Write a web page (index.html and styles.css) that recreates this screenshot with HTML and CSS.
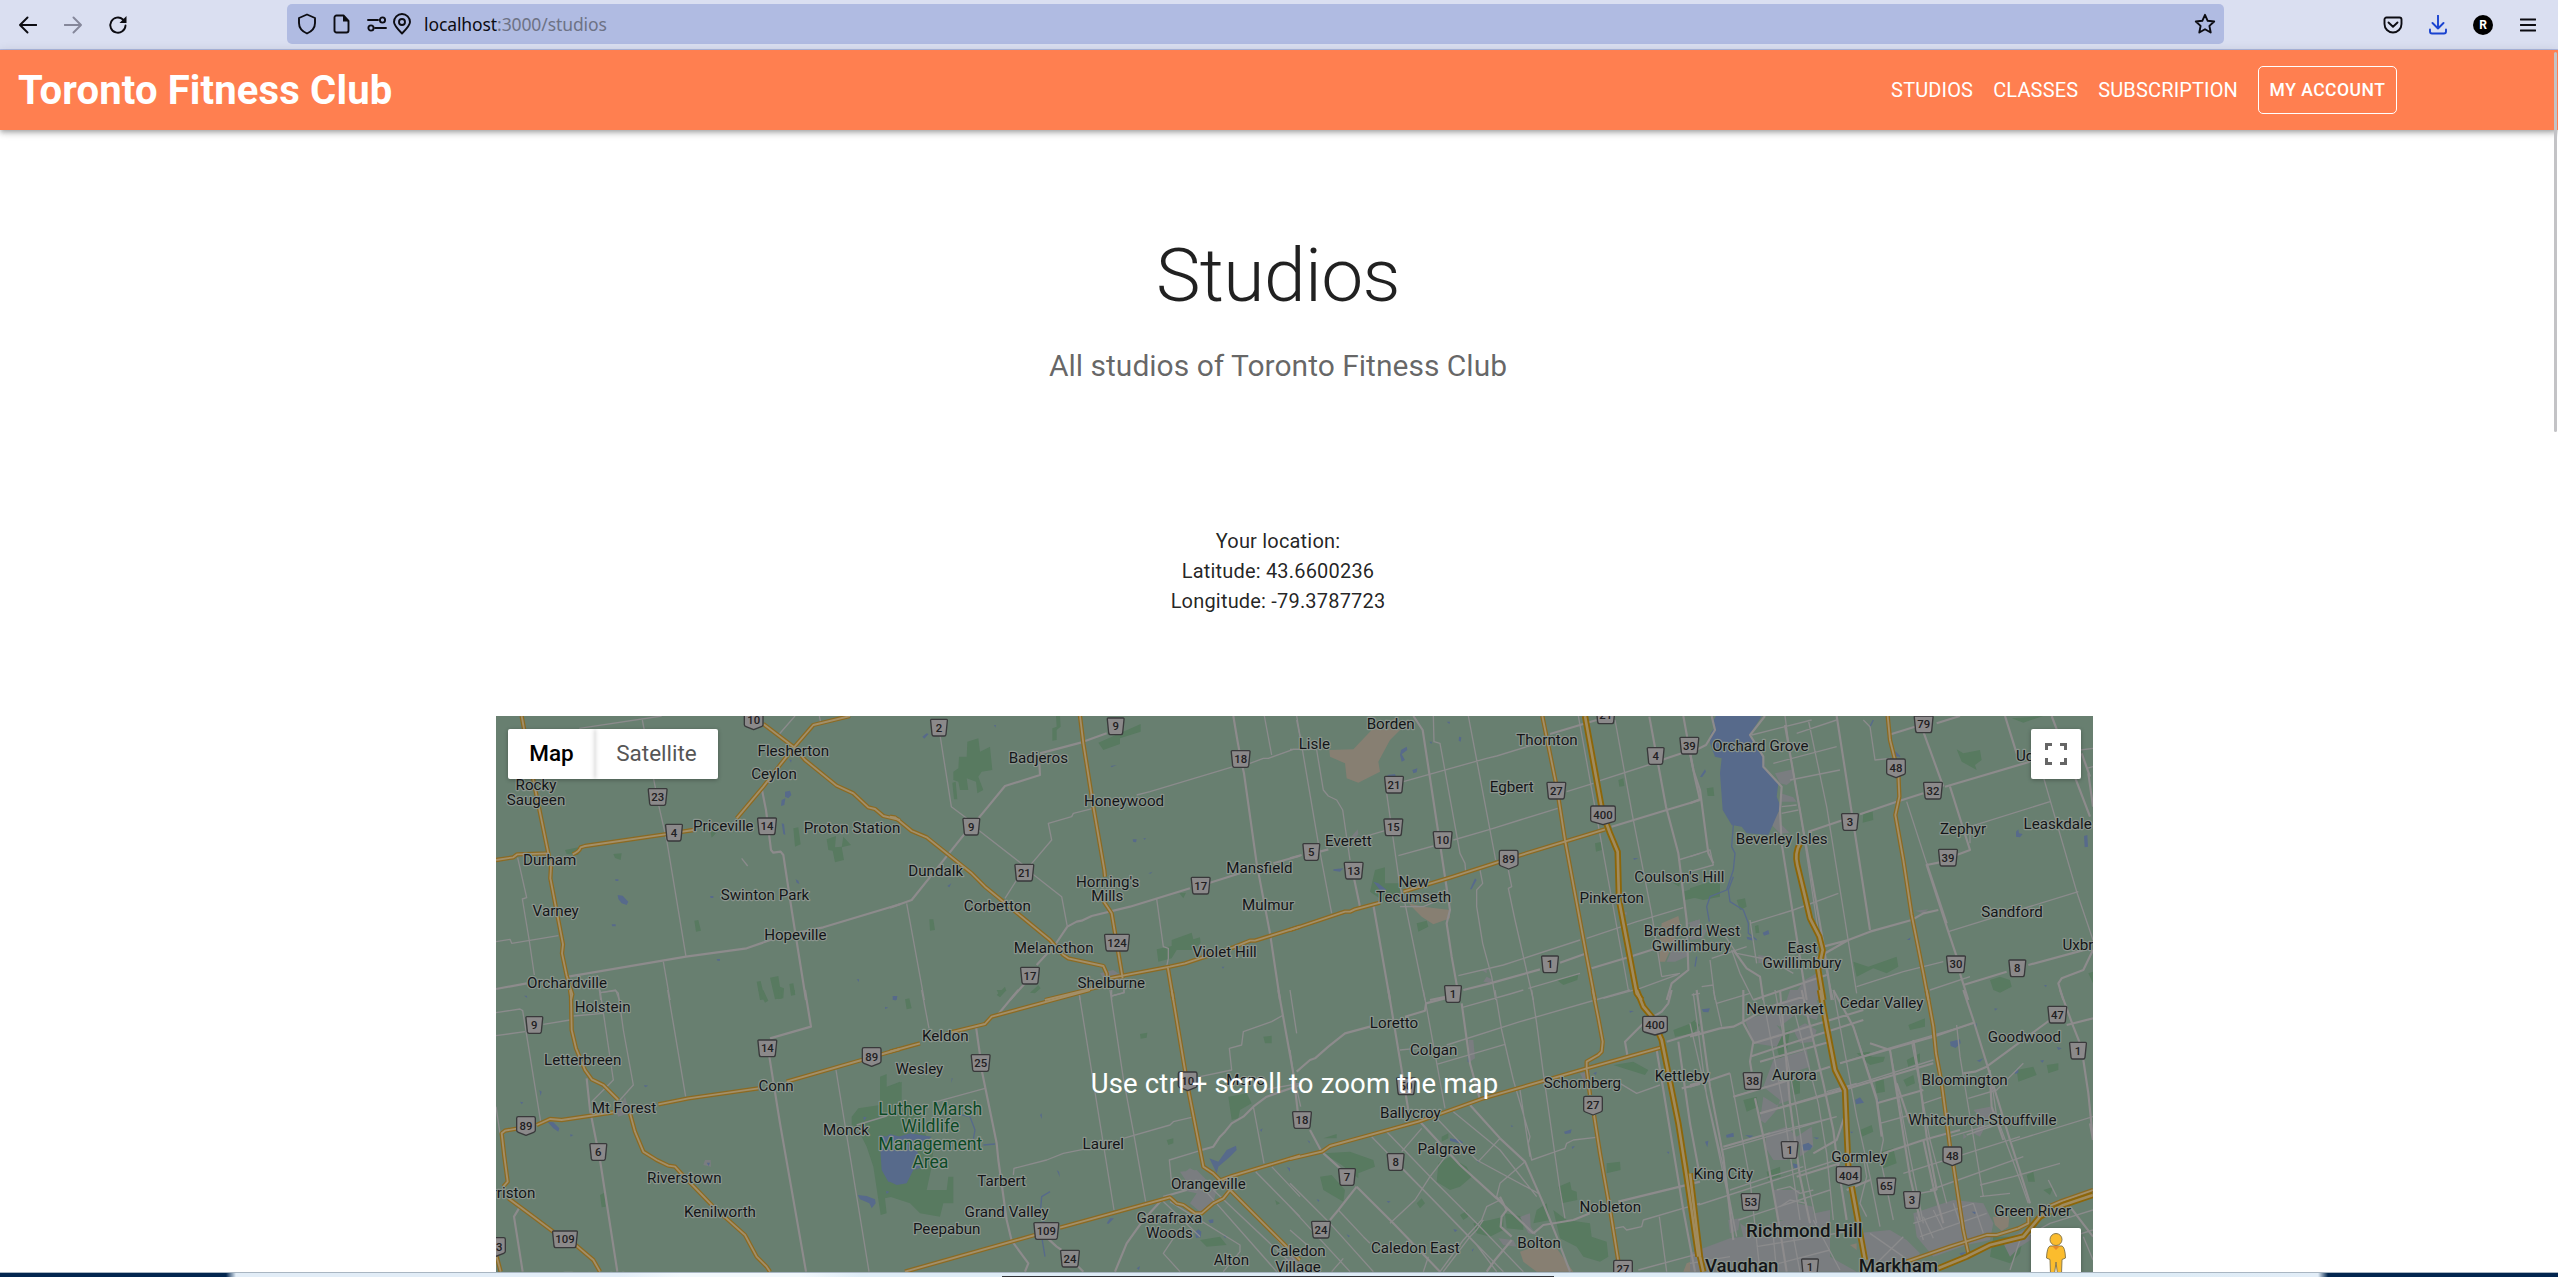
FILE: index.html
```html
<!DOCTYPE html>
<html lang="en">
<head>
<meta charset="utf-8">
<title>Toronto Fitness Club</title>
<link rel="stylesheet" href="styles.css">
</head>
<body>
<div class="browser-bar">
  <div class="nav-icons">
    <svg width="18" height="18" viewBox="0 0 18 18"><path d="M17.5 9H1.5M8.5 1.5 1 9l7.5 7.5"/></svg>
    <svg class="disabled" width="18" height="18" viewBox="0 0 18 18"><path d="M.5 9h16M9.500 1.500 17 9l-7.500 7.500"/></svg>
    <svg width="20" height="20" viewBox="0 0 20 20"><path d="M17.500 10.500a7.600 7.600 0 1 1-2.500-6"/><path class="solid" d="M18.500 1v7h-7z"/></svg>
  </div>
  <div class="url-bar">
    <svg class="i-shield" width="20" height="22" viewBox="0 0 20 22"><path d="M10 1.500 18 5v5c0 5-3.500 8.500-8 10.500C5.500 18.500 2 15 2 10V5z"/></svg>
    <svg class="i-doc" width="18" height="20" viewBox="0 0 18 20"><path d="M3.500 1.500h7l5 5.500v9.500a2 2 0 0 1-2 2h-10a2 2 0 0 1-2-2v-13a2 2 0 0 1 2-2z"/><path class="solid" d="M10 1v6.500h6z"/></svg>
    <svg class="i-perm" width="20" height="16" viewBox="0 0 20 16"><path d="M1 4h10M8 12h11"/><circle cx="15.500" cy="4" r="2.600"/><circle cx="4" cy="12" r="2.600"/></svg>
    <svg class="i-pin" width="20" height="22" viewBox="0 0 20 22"><path d="M10 20.500C6 16.500 2 12.500 2 9a8 8 0 0 1 16 0c0 3.500-4 7.500-8 11.500z"/><circle cx="10" cy="9" r="3"/></svg>
    <span class="url"><b>localhost</b>:3000/studios</span>
    <svg class="i-star" width="22" height="22" viewBox="0 0 22 22"><path d="m11 1.800 2.700 6 6.500.7-4.800 4.400 1.300 6.600-5.700-3.300-5.700 3.300 1.300-6.600L1.800 8.500l6.500-.7z"/></svg>
  </div>
  <div class="tool-icons">
    <svg width="20" height="18" viewBox="0 0 20 18"><path d="M3.500 1.500h13a2 2 0 0 1 2 2V8a8.500 8.500 0 0 1-17 0V3.500a2 2 0 0 1 2-2zM5.500 6.500 10 10.800l4.500-4.300"/></svg>
    <svg class="download" width="18" height="20" viewBox="0 0 18 20"><path d="M9 .5v13M3.500 8 9 13.500 14.500 8M1 14.500v2a2 2 0 0 0 2 2h12a2 2 0 0 0 2-2v-2"/></svg>
    <span class="avatar">R</span>
    <svg width="16" height="14" viewBox="0 0 16 14"><path d="M.5 1.500h15M.5 7h15M.5 12.500h15"/></svg>
  </div>
</div>

<header class="app-bar">
  <div class="brand">Toronto Fitness Club</div>
  <nav class="links"><a>STUDIOS</a><a>CLASSES</a><a>SUBSCRIPTION</a><button class="account">MY ACCOUNT</button></nav>
  <div class="scroll-thumb"></div>
</header>

<main class="content">
  <h1>Studios</h1>
  <p class="subtitle">All studios of Toronto Fitness Club</p>
  <p class="location">Your location:<br>Latitude: 43.6600236<br>Longitude: -79.3787723</p>
  <section class="map">
    <svg id="map-canvas" class="map-canvas" viewBox="0 0 4791 1668"></svg>
    <div class="map-type"><span class="active">Map</span><span>Satellite</span></div>
    <div class="map-button fullscreen"><svg width="22" height="22" viewBox="0 0 22 22"><path d="M1.500 7V1.500H7M15 1.500h5.500V7M20.500 15v5.500H15M7 20.500H1.500V15"/></svg></div>
    <div class="map-button pegman"><svg width="22" height="44" viewBox="0 0 22 44"><path class="peg" d="M5 14h12q3 1 3.500 12l-3.500 1.500L16.500 42h-4L11 30 9.500 42h-4L5 27.500 1.500 26Q2 15 5 14z"/><path class="collar" d="m7 14 4 4 4-4z"/><circle class="peg" cx="11" cy="7.500" r="6"/></svg></div>
    <div class="zoom-hint">Use ctrl + scroll to zoom the map</div>
  </section>
</main>
<footer class="desktop-strip"><div class="dock-edge"></div></footer>
<script src="map.js"></script>
</body>
</html>
```
FILE: styles.css
```css
* { box-sizing: border-box; }
body { margin: 0; width: 2558px; height: 1277px; overflow: hidden; background: #fff; font-family: Roboto, "Liberation Sans", sans-serif; color: rgba(0,0,0,.87); display: flex; flex-direction: column; }
svg { display: block; flex: none; }

.browser-bar { height: 50px; flex: none; background: #dadff1; border-bottom: 1px solid #b0bbe2; display: flex; align-items: center; }
.browser-bar svg { fill: none; stroke: #0c0c12; stroke-width: 1.9; stroke-linecap: round; stroke-linejoin: round; }
.browser-bar svg .solid { fill: #0c0c12; stroke: none; }
.nav-icons { width: 287px; padding-left: 19px; display: flex; align-items: center; gap: 26.500px; }
.nav-icons .disabled { stroke: #85879a; }
.url-bar { width: 1937px; height: 40px; margin-top: -1px; padding-left: 10px; background: #b0bbe2; border-radius: 5px; display: flex; align-items: center; }
.i-doc { margin-left: 16px; }
.i-perm { margin-left: 16px; }
.i-pin { margin-left: 5px; }
.url { margin-left: 12px; font: 17.500px/24px "Noto Sans", sans-serif; letter-spacing: -.1px; color: #6d7285; white-space: nowrap; }
.url b { font-weight: 400; color: #0c0c12; }
.i-star { margin: 0 8px 0 auto; }
.tool-icons { margin-left: 159px; display: flex; align-items: center; gap: 26px; }
.tool-icons .download { stroke: #1a43d0; }
.avatar { width: 20px; height: 20px; border-radius: 50%; background: #000; color: #fff; font: 700 12px/20px Roboto, sans-serif; text-align: center; }
.tool-icons svg:last-child { margin-left: 1px; }

.app-bar { position: relative; height: 80px; flex: none; background: #ff7f50; color: #fff; padding: 0 161px 0 18px; display: flex; align-items: center; justify-content: space-between; box-shadow: 0 2px 4px -1px rgba(0,0,0,.2), 0 4px 5px rgba(0,0,0,.14), 0 1px 10px rgba(0,0,0,.12); }
.brand { padding-top: 1px; font-size: 40px; font-weight: 700; line-height: 60px; letter-spacing: .15px; }
.links { display: flex; align-items: center; gap: 20px; font-size: 20px; line-height: 30px; letter-spacing: .15px; }
.account { width: 139px; height: 48px; padding: 0; border: 1px solid #fff; border-radius: 5px; background: none; color: #fff; font: 500 17.500px/30px Roboto, sans-serif; letter-spacing: .5px; }
.scroll-thumb { position: absolute; right: 1px; top: 2px; width: 3px; height: 380px; border-radius: 2px; background: #c3c3c6; }

.content { flex: 1; min-height: 0; padding: 100px 2px 0 0; display: flex; flex-direction: column; align-items: center; }
h1 { margin: 0; font-size: 75px; font-weight: 300; line-height: 90px; letter-spacing: -.625px; }
.subtitle { margin: 21px 0 0; font-size: 30px; line-height: 50px; color: rgba(0,0,0,.6); }
.location { margin: 135px 0 100px; font-size: 20px; line-height: 30px; letter-spacing: .19px; text-align: center; }
.map { position: relative; align-self: flex-start; width: 1597px; height: 556px; margin-left: 496px; flex: none; overflow: hidden; background: #687f70; }
.map-canvas { width: 1597px; height: 556px; }

.map-type { position: absolute; left: 12px; top: 13px; width: 210px; height: 50px; display: flex; border-radius: 2px; overflow: hidden; background: #fff; box-shadow: 0 1px 4px rgba(0,0,0,.3); font-size: 22.500px; line-height: 49px; color: #565656; text-align: center; }
.map-type span { width: 123px; box-shadow: 0 0 5px rgba(0,0,0,.2); }
.map-type .active { width: 87px; font-weight: 500; color: #000; }
.map-button { position: absolute; left: 1535px; width: 50px; height: 50px; display: grid; place-items: center; background: #fff; border-radius: 2px; box-shadow: 0 1px 4px rgba(0,0,0,.3); }
.fullscreen { top: 13px; }
.fullscreen path { fill: none; stroke: #666; stroke-width: 3; }
.pegman { top: 512px; height: 58px; padding-top: 4px; place-items: start center; }
.peg { fill: #fbbc2d; stroke: #8a7a4c; stroke-width: 1; }
.collar { fill: #e58a2c; }
.zoom-hint { position: absolute; left: 0; right: 0; top: 343px; height: 50px; color: #fff; font-size: 27.500px; line-height: 50px; letter-spacing: .15px; text-align: center; }

.forest { fill: #587a60; }
.water { fill: #576a8b; }
.town { fill: #7a7d80; }
.sand { fill: #877f72; }
.minor, .road, .river, .highway-edge, .highway, .freeway-edge, .freeway { fill: none; stroke-linejoin: round; }
.river { stroke: #576a8b; stroke-width: 4; }
.minor { stroke: #8b8b8c; stroke-width: 4; }
.road { stroke: #8d8b8c; stroke-width: 6.500; }
.highway-edge { stroke: #8c6a22; stroke-width: 13; }
.highway { stroke: #a38f68; stroke-width: 5.500; }
.freeway-edge { stroke: #8d6608; stroke-width: 19; }
.freeway { stroke: #a08b5e; stroke-width: 8; }
.place { font-size: 45.500px; fill: #141618; stroke: #8b958e; stroke-width: 7; stroke-linejoin: round; paint-order: stroke; text-anchor: middle; }
.city { font-size: 56px; font-weight: 500; }
.park { font-size: 53px; fill: #0d4a26; }
.badge { fill: #8b898a; stroke: #39393b; stroke-width: 4; stroke-linejoin: round; }
.badge-text { font-size: 34px; fill: #1f2022; text-anchor: middle; font-weight: 500; }

.desktop-strip { height: 5px; flex: none; border-top: 1px solid #a9b6c2; background: linear-gradient(90deg, #02264f 0 226px, #e2edf7 236px 620px, #f2f8fc 680px 800px, #deecf6 860px 2160px, #e2edf7 2318px, #02264f 2328px); }
.dock-edge { width: 552px; height: 1px; margin: 3px 0 0 1002px; background: #303236; }
```
FILE: map.js
```js
// Map geometry is stored per tile, in tile units (three units per screen pixel).
const tiles = [
  { x: -18, y: -18,
    forest: "M910 355 925 352 932 403 915 410zM1010 388 1038 378 1035 412 1055 410 1062 450 1035 457 1028 422 1015 420zM1060 380 1083 405 1055 412zM370 432 395 430 392 450 375 444zM613 632 625 630 633 662 618 665zM840 803 865 798 870 830 882 835 880 865 855 868zM800 815 812 813 825 868 810 870zM898 822 910 820 916 855 903 857zM225 420 265 412 265 435 230 432zM660 360 678 370 665 383z",
    water: "M383 555 398 557 415 575 410 585 395 580 385 567zM885 245 900 242 904 255 895 265 885 260zM875 270 886 265 883 285 873 288zM875 340 882 342 886 375 880 372zM917 508 925 512 928 522 920 518zM660 558 670 558 670 564 662 564zM365 643 377 643 377 649 367 649zM375 508 385 508 385 513 377 513zM680 747 690 747 690 752 682 752zM897 148 905 150 903 158zM1208 858 1222 858 1220 870 1208 870zM1100 808 1107 808 1107 816zM102 857 110 857 112 864z",
    minor: "M457 30 480 150 507 290 530 390 588 740M83 443 110 563 97 567 118 693 133 795M18 695 60 688 65 700 205 677M268 55 515 18M520 755 540 870M322 795 332 870M332 848 378 842 388 870M868 72 915 18M988 18 992 38M755 445 773 468",
    road: "M18 837 110 820M235 800 588 740 770 715 870 680 1000 652 1230 583M815 235 828 300 843 420 850 428 872 425 880 435 905 600 948 870",
    highway: "M95 18 130 210 175 430 183 470 181 505 219 703 216 730 230 797 247 853 243 870M18 450 70 442 82 433 170 430M248 433Q268 425 272 412L285 408 525 373 610 360M740 325 820 230 870 165 912 112 970 45 1080 18M820 42 912 112 945 150 1040 227 1090 250 1135 292 1155 297 1180 318 1230 330",
    freeway: "" },
  { x: 1182, y: -18,
    forest: "M232 95 265 85 270 125 300 110 307 180 275 185 265 200 280 240 262 250 258 215 230 205 235 240 210 240 205 215 190 210 190 185 205 175 207 140 230 140zM187 218 197 215 202 268 192 268zM625 98 752 42 752 65 690 85 690 102 640 120zM498 18 510 18 512 50 500 60 500 90 487 92 487 55 500 50zM118 628 130 628 135 660 120 662zM845 690 905 668 910 688 930 682 932 700 905 720 860 720 845 745 805 755 800 718 845 708zM320 855 345 830 348 840 330 862zM420 848 445 825 452 835 435 850zM868 550 888 548 880 565z",
    water: "M97 80 110 70 116 72 103 86zM662 168 680 165 665 172zM728 388 740 388 738 397 730 396zM172 528 184 520 178 532zM775 490 787 485 782 491zM10 858 20 858 18 868 10 868zM312 45 318 45 316 53zM760 385 768 384 764 390zM995 770 1003 770 999 776z",
    town: "M630 790 670 780 700 800 690 815 650 820z",
    minor: "M150 75 184 290 230 325M265 360 400 465M380 510 345 565M425 490 515 560 532 650M400 490 485 390 475 340 545 320 550 310 610 295M740 255 780 245 930 200 1030 170M50 580 103 870M800 567 820 710 835 715 835 745 830 770M568 850 570 870M665 840 665 870M665 858 702 848 702 835M1123 18 1145 135M1080 160 1120 145 1135 145 1210 118 1230 118M1220 30 1230 80",
    road: "M650 70 575 97 450 130M448 160 450 195 345 228 265 325M225 370 65 570 0 593M1030 18 1042 90 1055 160 1062 190 1100 460 1140 670 1170 870M532 650 560 635 575 632 605 618 720 590 900 535M955 520 1050 490M1150 460 1230 437M532 650 495 705 440 765M405 820 360 870",
    highway: "M570 18 580 100 610 290 643 480 645 500M625 550 665 610 698 805M0 320 15 322 65 363 110 382 245 490 285 530 340 575 480 690 520 735 535 745 640 768 650 790 652 830 655 805 840 770 885 760 1030 712 1080 692 1095 692 1230 650M465 870 650 825M833 770 850 870",
    freeway: "" },
  { x: 2382, y: -18,
    forest: "M255 480 285 472 285 520 330 520 330 560 290 580 240 545zM380 640 410 632 415 650 385 665zM915 400 935 395 935 420 918 425zM985 210 1000 205 1003 228 988 230zM1180 545 1230 528 1230 560 1185 570zM800 810 865 793 862 810 820 825zM1150 520 1170 515 1168 530z",
    water: "M333 120 350 110 352 120 335 133 345 150 335 155 330 135zM367 180 382 175 380 187 370 190zM292 195 315 192 318 200 295 202zM250 515 265 520 290 540 270 540zM555 505 560 510 545 538 540 538zM470 35 480 35 478 42zM507 80 514 82 512 95 506 92zM130 478 160 475 150 485 130 482zM1030 444 1045 445 1032 450zM418 95 426 95 424 102z",
    town: "M180 385 203 358 205 372 190 395zM580 815 590 800 605 808 605 820zM1130 755 1145 720 1200 710 1190 740 1155 755zM1190 640 1230 628 1230 650zM1000 610 1010 605 1010 615zM575 780 590 778 590 790z",
    sand: "M118 120 190 118 245 60 325 20 330 60 300 90 265 155 270 185 205 218 170 205 165 160 120 140zM355 580 400 590 480 600 480 625 430 643 395 620zM1110 690 1115 640 1165 618 1170 640 1150 700 1125 755 1108 755z",
    minor: "M20 18 85 400 125 610M0 118 70 118M80 120 100 240 115 258 140 270 158 300 180 450M290 250 330 530 345 580 405 870M430 18 432 95 450 100 510 430 525 460 527 485M535 18 617 450M340 215 590 145 620 138 770 92M325 437 430 408M490 390 600 358 690 330 803 295M830 245 910 220M205 385 285 362M570 480 578 520 560 540 560 590 578 700 605 800 617 870M655 480 665 530 655 535 675 630 730 870M865 18 1015 840M975 30 1028 320 1085 610 1115 800M505 797 640 765 870 690M890 685 1040 635 1180 593M920 215 1075 165M1165 450 1230 430M330 590 400 590 460 565M1115 800 1170 790M715 835 870 790M940 865 1050 835 1165 793",
    road: "M370 18 398 60 430 270 480 600 470 640 485 740 503 840M0 445 35 435M90 425 115 418M205 480 190 495 210 590M250 585 300 870M520 840 600 820 750 778M810 758 890 730M905 775 1020 740 1100 715M780 72 920 30M1078 20 1128 290 1165 430 1190 630 1195 780 1170 800 1145 820 1130 870M965 350 1130 300 1230 270M1180 18 1195 100 1215 205 1230 270M1075 165 1130 145 1180 128M420 870 470 860",
    highway: "M757 18 800 230 825 390 890 740 915 870M0 660 165 605 180 605 195 598 270 578M340 545 480 503 650 448 945 358",
    freeway: "M885 18 938 310 960 370 983 425 987 570 1040 850 1055 870" },
  { x: 3582, y: -18,
    forest: "M800 118 820 130 870 120 875 150 855 165 860 180 815 155zM520 310 548 305 550 330 518 338zM50 235 70 232 73 258 53 258zM490 755 535 770 620 740 625 770 590 790 550 775 500 800zM0 535 60 515 90 520 90 560 40 570 0 560zM140 570 165 565 170 590 150 600zM900 810 930 800 960 810 965 830 930 848 910 840zM965 25 1060 18 1000 38zM1195 790 1209 785 1209 820zM195 648 205 645 208 668 197 670z",
    water: "M78 18 215 18 182 70 185 85 215 120 225 175 265 220 260 260 272 290 235 375 170 370 155 350 125 345 98 300 90 190 95 145 75 140 60 100 62 70 75 52 66 38zM30 200 45 178 48 185 36 202zM978 365 985 358 987 370 998 372 990 382 978 380zM1182 378 1192 375 1194 410 1184 412zM218 668 235 660 238 672 222 677zM650 690 662 682 660 690zM612 125 630 138 620 140zM1062 825 1070 825 1068 832zM170 680 190 684 190 692 172 688z",
    town: "M255 190 310 178 315 205 290 225 270 220zM272 250 310 262 320 275 275 275 270 340 300 370 270 370 240 340 270 300zM0 640 20 630 30 650 0 660zM205 735 240 740 240 755 205 760zM300 870 345 810 380 790 385 870zM675 602 715 598 700 610zM0 650 50 660 40 685 0 690z",
    river: "M130 345 125 410 135 430 130 480 110 540 60 560 50 590 58 635M130 500 115 540 120 575 160 600 175 640 175 670 200 690M540 50 550 30M615 125 630 140M20 740 15 770",
    minor: "M285 18 300 130 330 300 390 700 430 870M355 30 410 290 460 600 500 850M185 75 365 30M320 70 440 30M250 160 440 110M300 210 450 180M520 30 540 50 555 150 600 145M650 275 710 460M180 640 310 600 445 550M180 630 200 760M65 745 170 710M840 400 840 350 1080 275M1025 80 1160 545 1209 690M775 665 920 620 1165 545M500 830 640 785 760 755M720 840 840 800M1170 120 1209 115M1190 175 1209 170M0 440 60 420 70 465 0 485M60 750 75 870M125 720 150 790 190 870M35 830 70 825M275 310 325 300M275 290 320 285M100 670 140 730 240 750 310 790",
    road: "M225 18 180 75 220 140 220 170 275 230 270 300 275 400 350 870M18 120 48 105 75 60 65 18M285 45 340 360 400 700 425 870M0 130 10 180 30 240 55 430 70 460M0 280 30 268M355 365 475 325M510 313 620 275 700 250M765 230 1020 155M595 75 675 50M740 40 810 18M700 65 760 230M780 230 840 420 800 435M760 455 710 465 775 665 800 740M710 460 770 640M810 790 835 870M370 750 475 690 540 665 665 630 700 610 745 600M440 18 540 660M945 18 980 130M1085 18 1200 320M820 825 950 785M1015 765 1200 715M1209 720 1180 780 1115 805 1105 820 1120 870M190 870 410 795M130 720 170 775 210 800 220 870M1195 190 1209 290M1175 130 1200 200M400 710 475 690",
    highway: "M593 18 600 90 625 190 628 260 616 315 640 450 665 615 700 790 715 870",
    freeway: "M330 400 Q313 430 322 465L345 560 360 625 388 680 398 720 385 780 400 870" },
  { x: -18, y: 822,
    forest: "M1170 260 1190 252 1190 290 1230 275 1230 615 1185 625 1190 670 1172 675 1150 530 1130 470 1100 410 1085 405 1085 380 1105 355 1170 345zM805 0 820 0 835 32 825 38zM865 0 875 0 876 25 866 28zM905 0 915 0 914 15zM330 615 343 608 347 650 335 652z",
    water: "M172 395 190 397 208 415 205 425 190 415zM1168 435 1190 440 1200 432 1230 440 1230 580 1195 575 1175 540zM1103 615 1130 618 1155 628 1157 640 1145 655 1138 640 1110 628zM148 300 155 305 152 318zM462 285 475 287 465 292zM1208 18 1220 22 1215 32zM1185 50 1195 53 1185 57zM1188 603 1198 605 1190 612zM90 335 100 337 95 343zM240 433 250 435 242 440zM650 518 660 518 656 528zM376 267 384 270zM1120 380 1130 382 1122 392z",
    town: "M640 525 645 510 662 510 663 530zM380 370 405 320 420 370 400 375 385 380z",
    minor: "M18 68 90 57 98 62 152 395M18 137 105 125M160 103 240 90M250 78 340 70M533 0 587 320M330 0 370 270 305 335M375 0 385 10 400 120 430 285 390 330M332 8 378 0M1038 240 1137 845M1100 405 1190 378M18 350 30 430",
    road: "M290 265 300 360 330 510 382 845M945 0 963 110 840 145M838 200 870 400 948 845M90 650 72 680 98 845",
    highway: "M240 0 243 20 245 120 258 175 285 240 305 268 340 285 385 330M505 343 595 325 805 295M890 275 1115 210 1230 177M140 405 180 387 215 390 370 367M420 370 435 425 460 485 500 510 535 527 555 530 575 552 670 650 765 735 800 800 830 830 840 845M85 415 45 422 35 430 43 500 53 575 40 590M55 625 130 680 190 725M245 755 310 810 330 845M20 800 32 845",
    freeway: "" },
  { x: 1182, y: 822,
    forest: "M0 290 35 275 35 330 0 345zM0 340 50 335 90 370 100 420 130 480 125 530 110 600 170 600 175 560 190 560 190 640 160 640 150 680 90 670 60 640 0 620zM45 28 58 25 65 55 50 58zM750 132 772 128 770 143 752 146zM1120 140 1145 137 1145 160 1125 160zM1015 320 1070 310 1085 340 1050 360 1045 385 1025 390zM830 450 850 445 850 460 835 465zM320 0 350 0 330 20zM1155 630 1170 640 1160 645zM930 750 990 740 1010 765 950 770z",
    water: "M0 450 25 440 60 430 125 440 80 480 100 530 70 540 50 580 20 585 0 575zM958 505 985 515 1010 480 1038 467 1040 480 1020 500 985 530 980 550zM915 725 925 718 934 725 932 742 918 744zM955 690 970 688 970 698 960 700zM650 700 660 685 672 685 655 702zM500 540 507 545 510 562zM450 375 455 370 456 387zM10 20 18 20 16 32zM1110 420 1118 415 1114 426zM185 265 188 265 184 280zM1190 530 1200 535 1200 545zM1000 737 1010 737 1006 745zM740 835 750 828 747 840z",
    town: "M845 595 860 570 890 575 870 545 920 540 940 560 980 600 970 640 930 665 900 640 920 610zM885 545 900 535 920 545zM1180 810 1230 790 1230 830 1190 840z",
    river: "M190 370 240 380 255 420 248 460M480 605 455 620 450 680 465 700M280 465 315 462M455 740 465 800",
    minor: "M95 0 117 115M568 15 672 660M660 0 700 265 730 425 767 635M665 18 702 8 702 0M370 555 372 535 470 510 520 490 580 478M700 445 840 405 850 395 905 382M930 260 1025 240 1018 175 1055 165 1060 125 1145 95 1180 75M140 335 285 295M845 580 838 510 930 482M840 635 1050 765 1050 785 1000 845M1090 350 1122 520M1097 545 1230 680M1145 530 1230 620M935 590 1160 845M970 600 1230 845M810 625 930 740M870 715 820 790 870 845M1015 600 1130 710 1230 830M1120 300 1230 280",
    road: "M385 0 325 72M258 110 270 195M275 240 320 460 325 510 350 690 365 752 415 820 405 845M440 715 500 770 515 780M560 825 580 845M1165 0 1210 250 1225 380M1230 285 1130 320 1090 350 1060 380 1025 400 1005 425 990 440 970 470 935 480M820 625 760 690 710 760 675 845M820 620 890 600",
    highway: "M0 185 90 160M170 130 285 102 305 80 600 0M845 0 870 150 895 300 940 530 970 550 1020 600 1230 810M510 713 840 622 860 640 880 645 915 670 935 670 970 640 1000 625 1020 600M980 575 1020 560 1230 497M45 845 435 735",
    freeway: "" },
  { x: 2382, y: 822,
    forest: "M100 490 180 485 250 510 255 530 205 550 205 565 155 525zM90 560 125 555 165 600 160 635 100 600zM445 520 480 500 530 530 545 560 510 590 480 600 440 575zM805 590 840 575 845 600 860 605 862 630 815 640zM790 660 830 690 900 700 905 740 950 755 955 800 930 815 880 800 860 770 810 745zM600 690 640 680 640 720 600 740 560 730 550 700zM645 670 700 680 700 720 650 715zM1150 120 1215 95 1230 105 1210 130 1155 140zM950 520 990 515 992 540 950 550zM970 225 1030 215 1075 240 1065 255 1000 235zM380 640 395 625 405 640 390 655zM510 675 530 662 535 680 520 690zM740 660 770 640 780 690 730 700zM100 445 140 432 140 445zM455 440 475 430 475 445 455 455z",
    water: "M480 445 510 450 520 458 505 460 480 452zM822 425 845 418 842 430 825 432zM845 470 855 468 847 477zM534 185 540 190 540 220 533 215zM490 717 502 720 495 727zM170 733 180 738 175 742zM80 628 88 630 85 636zM545 780 552 775 548 785zM290 633 302 634 295 639zM662 406 670 408 665 412zM910 250 920 245 918 255zM1130 485 1138 485 1136 492zM1018 62 1032 63 1020 68zM560 512 568 512 566 518zM52 450 60 455 58 460z",
    town: "M535 150 550 150 555 205 540 215zM690 680 720 670 722 710 740 735 715 730zM625 745 670 750 680 770 640 765zM870 250 900 245 895 275 880 270z",
    sand: "M690 785 760 760 800 775 850 845 740 845 700 815zM1190 820 1230 805 1230 845 1180 845z",
    minor: "M0 180 10 250 32 350M400 0 465 355M330 180 380 175M440 223 645 163M470 165 690 95 1020 0M515 53 660 12 700 0M615 0 635 120 670 270 720 440 715 460 725 510 790 487 825 475 830 460 850 450 918 442M725 0 740 100 760 250 810 600 825 685M690 300 720 500M440 385 560 510 745 610M490 365 630 480 740 620M245 440 450 650 640 845M290 425 430 570 560 700 700 845M395 415 335 485M340 540 420 620 560 765 620 845M1205 15 1230 10M640 640 620 620 630 580 705 515M300 700 375 630 420 560 490 470M580 690 560 720 540 740 460 845M450 845 520 750 575 690 590 650 630 630M0 580 120 700 250 845M0 650 180 845M145 660 220 740 240 760M0 720 80 790M415 800 400 845M125 845 160 805M955 275 990 280 1040 310 1110 285M975 715 1000 710 1010 720 1055 710 1060 690 1230 640M1108 680 1130 845M1045 840 1230 790M565 515 630 445M0 0 20 130",
    road: "M20 245 60 210 75 205 115 170 165 130 240 110M345 80 405 62 408 40 465 25M295 0 355 360M515 40 540 220 570 330M390 395 510 525 620 625 730 730M540 345 630 445 705 515 760 640 800 740 840 845M60 420 95 485 150 535M200 590 145 660 120 690M200 590 310 700 450 845M850 690 900 670M730 730 760 705 850 690M985 635 1170 590 1230 575M1145 0 1135 40 1115 65 1065 95 1005 155 1012 195M1130 155 1230 125M1100 180 1180 660 1215 845M1165 155 1200 400 1230 560M630 620 650 660 635 680 632 710 665 740M665 750 615 810 590 845M1175 295 1230 282",
    highway: "M908 0 925 85 938 155 935 185 925 195 890 215 890 235 900 315M912 375 930 490 962 670 990 845M0 507 95 485 120 468 385 395 580 325 890 235 1115 172",
    freeway: "M1040 0 1060 50 1085 80 1115 150 1165 400 1190 560 1225 800" },
  { x: 3582, y: 822,
    forest: "M160 330 200 320 205 350 170 365zM500 190 540 185 545 200 585 200 580 215 540 225zM555 270 580 260 585 305 560 310zM650 210 690 190 690 215 655 230zM655 105 705 85 705 110 660 120zM980 240 1030 230 1040 255 985 275zM1070 225 1105 220 1105 240 1075 250zM230 545 270 530 272 560 235 570zM570 485 610 475 620 520 580 535zM1010 555 1030 545 1035 575 1015 575zM510 420 545 405 550 425 515 440zM640 270 670 255 675 280 650 290zM0 100 15 90 15 140 0 145zM270 130 300 120 290 190 270 210 260 170zM910 740 1000 740 990 790 960 820 900 800zM1060 600 1090 590 1080 615zM300 250 330 250 330 310 310 315z",
    water: "M780 155 810 148 812 160 797 174 782 168zM335 465 355 458 368 468 360 480 338 482zM495 330 510 322 522 338 498 343zM975 240 985 236 985 248 975 252zM108 435 130 428 132 440 110 443zM45 455 55 452 52 472zM308 520 330 525 320 535 312 535zM1100 170 1115 175 1105 180zM35 58 60 55 55 67 40 66zM165 435 190 437 180 443zM370 442 388 443 380 448zM850 103 860 100 858 120zM860 212 880 205 870 216zM557 335 565 328 567 340zM1050 212 1062 210 1058 218zM808 790 830 785 815 797zM845 665 858 665 855 673zM480 425 490 425 485 430zM913 55 923 56 915 62z",
    town: "M300 0 370 0 390 60 380 90 320 70 270 110 230 90 230 50 290 30zM165 90 230 70 280 130 260 170 190 160zM310 120 345 100 380 120 370 155 330 160zM250 210 350 180 360 230 300 250 300 330 260 345 220 320 210 390 225 400 260 360 270 330 220 290zM230 430 290 410 320 440 365 410 370 470 330 500 330 460 290 510 250 510 225 470zM190 720 280 690 420 660 420 800 500 845 0 845 0 790 120 745 160 740 150 700 180 720zM500 730 600 720 650 750 690 790 660 845 540 845zM670 670 790 630 880 640 910 700 900 750 830 765 730 800 680 740zM250 600 330 600 320 640 370 650 370 690 260 690zM850 360 900 350 920 370 890 400 870 440 850 430 880 390zM940 760 1000 720 1030 745 990 770 960 800zM115 690 150 685 145 720 120 730zM820 430 830 440 820 447z",
    sand: "M908 680 958 680 955 710 935 723 915 705zM380 60 410 60 400 90zM1130 620 1145 620 1145 630zM480 765 500 760 500 780z",
    minor: "M0 100 100 530 140 740M10 10 50 320 110 600 140 740M70 0 95 110M80 40 180 10M120 250 180 570 210 845M130 320 230 290M215 0 280 350 310 560 330 690M255 0 320 360 350 560 380 700M310 50 385 340 410 490 430 690M430 0 500 380 540 560 570 710M95 480 320 415 440 380M25 645 440 510M210 370 460 295 730 210M120 600 240 560 340 530M145 690 420 600M600 180 660 500 700 700M665 155 720 450 770 640M800 105 810 200 850 440 880 620M240 430 440 380M490 110 560 320 580 450 570 500 610 690M450 220 580 180 850 100M410 305 500 280M570 400 660 375M700 340 760 320M835 325 920 300 1000 220M830 435 960 390M900 240 920 380 990 570 1015 640M780 440 900 405M965 455 1209 380M640 550 990 440M720 600 1000 500M870 585 970 560 1110 520M1075 570 1100 620M870 620 960 610M1080 760 1209 720M960 840 990 750 1080 700 1209 660M640 620 740 600M680 680 700 750M700 680 730 745M730 660 760 720M670 700 850 640M690 740 890 670M790 640 810 700M850 640 880 730M230 830 420 780M250 740 260 845M310 740 330 845M370 690 450 840M0 820 120 800M200 770 500 720M260 600 300 590 330 610 370 600M270 650 300 630 350 640M540 730 640 800M560 820 640 740M520 500 530 560 510 640 530 680M1180 740 1209 810M900 250 905 330",
    road: "M0 140 90 115 130 110 160 95 240 50 340 20M160 0 160 100 190 155 180 215 185 245M120 250 60 270 0 285M20 0 60 290 100 500 130 750M195 325 220 440 265 690 290 845M270 0 300 340 330 560 360 700M335 0 400 280 430 420 440 500 470 690M430 0 490 110 560 330 575 440M190 160 520 60M210 215 420 155M130 320 250 285 420 230M210 370 460 300 730 220M450 220 730 140 855 97M820 0 850 90 890 220 960 450 1020 640M890 230 1080 90M1110 0 1150 110 1170 160M1180 210 1195 310 1209 450M890 230 855 245 820 250M180 200 270 170 520 90M100 470 240 430M370 490 440 450 470 360M580 490 700 450 810 420M540 160 600 180 660 560 690 690M320 560 450 520M900 270 905 350 940 450M470 600 540 570M1130 105 1209 85M700 450 730 590 760 700M1140 650 1209 740M1200 400 1209 450M670 150 690 280 710 440 740 600M30 280 0 290M560 340 700 300M620 280 660 400",
    highway: "M710 0 730 110 738 190 755 280 780 470M790 525 820 720 835 790M650 815 780 770 890 735 920 735 985 715 1015 700 1015 680M1050 660 1110 635 1209 600",
    freeway: "M390 0 410 110 435 240 465 300 470 420 475 530M485 590 525 810M0 550 30 800 40 845M745 835 830 800 900 765 1000 740 1050 680 1120 645 1209 615" }
];

const places = [
  [0, "910 122 Flesherton", "852 192 Ceylon", "138 223 Rocky", "138 269 Saugeen", "700 348 Priceville", "1086 352 Proton Station", "179 449 Durham", "825 554 Swinton Park", "197 602 Varney", "916 674 Hopeville", "231 817 Orchardville"],
  [1, "445 142 Badjeros", "702 272 Honeywood", "137 483 Dundalk", "1108 473 Mansfield", "653 514 Horning's", "652 558 Mills", "322 588 Corbetton", "1134 583 Mulmur", "491 712 Melancthon", "1004 726 Violet Hill", "664 819 Shelburne"],
  [2, "302 42 Borden", "73 101 Lisle", "771 89 Thornton", "665 230 Egbert", "175 393 Everett", "371 515 New", "371 560 Tecumseth", "965 562 Pinkerton", "1168 500 Coulson's Hill", "1206 662 Bradford West", "1204 707 Gwillimbury"],
  [3, "211 107 Orchard Grove", "275 386 Beverley Isles", "819 355 Zephyr", "1103 341 Leaskdale", "966 605 Sandford", "337 713 East", "336 759 Gwillimbury", "1038 137 Udora", "1207 705 Uxbridge"],
  [4, "338 51 Holstein", "278 209 Letterbreen", "402 352 Mt Forest", "858 286 Conn", "1068 418 Monck", "583 564 Riverstown", "690 665 Kenilworth", "42 609 Harriston", "325 865 Teviotdale"],
  [5, "166 136 Keldon", "88 237 Wesley", "1067 268 Mono", "640 461 Laurel", "335 573 Tarbert", "350 664 Grand Valley", "170 716 Peepabun", "955 582 Orangeville", "838 684 Garafraxa", "838 729 Woods", "1024 809 Alton", "1224 782 Caledon", "1224 829 Village"],
  [6, "312 97 Loretto", "431 180 Colgan", "361 367 Ballycroy", "470 475 Palgrave", "376 772 Caledon East", "747 757 Bolton", "877 277 Schomberg", "961 650 Nobleton", "1176 258 Kettleby"],
  [7, "285 56 Newmarket", "575 37 Cedar Valley", "1003 141 Goodwood", "313 255 Aurora", "824 268 Bloomington", "877 390 Whitchurch-Stouffville", "508 500 Gormley", "100 551 King City", "1028 661 Green River"]
];
const cities = [[7, "343 722 Richmond Hill", "155 825 Vaughan", "625 825 Markham"]];
const parks = [[5, "121 357 Luther Marsh", "121 409 Wildlife", "121 462 Management", "121 515 Area"]];
// County roads use a tapered plate, provincial highways a shield.
const county = [
  [0, "503 261 23", "552 368 4", "831 349 14"],
  [1, "147 53 2", "677 49 9", "244 350 9", "403 488 21", "932 527 17", "681 698 124", "420 797 17", "1052 147 18", "560 -13 124"],
  [2, "312 224 21", "310 352 15", "458 390 10", "64 426 5", "191 482 13", "799 242 27", "947 16 21", "1097 138 4", "1198 107 39", "780 763 1", "489 852 1"],
  [3, "701 43 79", "729 242 32", "480 336 3", "774 443 39", "798 763 30", "982 775 8"],
  [4, "133 105 9", "832 175 14", "325 486 6", "225 748 109"],
  [5, "272 219 25", "469 723 109", "540 806 24"],
  [6, "36 390 18", "317 516 8", "171 561 7", "93 719 24", "348 289 50"],
  [7, "1102 74 47", "1164 182 1", "188 273 38", "299 480 1", "182 636 53", "589 589 65", "666 630 3", "360 832 1"]
];
const provincial = [
  [0, "791 30 10"], [2, "939 315 400", "656 448 89"], [3, "618 174 48"],
  [4, "1145 200 89", "108 407 89", "18 770 23"], [5, "893 273 10"],
  [6, "1095 106 400", "909 346 27", "999 838 27"], [7, "476 557 404", "787 498 48"]
];

const svg = document.getElementById("map-canvas");
const out = [];
const paint = (key, cls) => tiles.forEach(t => {
  if (t[key]) out.push(`<path class="${cls}" transform="translate(${t.x} ${t.y})" d="${t[key]}"/>`);
});
["forest", "sand", "town", "water", "river", "minor", "road"].forEach(k => paint(k, k));
["highway", "freeway"].forEach(k => { paint(k, k + "-edge"); paint(k, k); });

const each = (groups, draw) => groups.forEach(([i, ...items]) => items.forEach(item => {
  const [, x, y, text] = item.match(/^(\S+) (\S+) (.*)$/);
  draw(+x + tiles[i].x, +y + tiles[i].y, text);
}));
const badge = (shape) => (x, y, n) => {
  const w = [24, 27, 36][n.length - 1];
  out.push(`<g transform="translate(${x} ${y})"><path class="badge" d="${shape(w)}"/><text class="badge-text" y="12">${n}</text></g>`);
};
each(county, badge(w => `M${-w + 2}-25H${w - 2}Q${w + 2}-25 ${w + 1}-20L${w - 3} 20Q${w - 4} 25 ${w - 8} 25H${8 - w}Q${4 - w} 25 ${3 - w} 20L${-w - 1}-20Q${-w - 2}-25 ${-w + 2}-25z`));
each(provincial, badge(w => `M${4 - w}-27H${w - 4}Q${w + 1}-27 ${w + 1}-22V14Q${w + 1} 18 ${w - 4} 20L0 29 ${4 - w} 20Q${-w - 1} 18 ${-w - 1} 14V-22Q${-w - 1}-27 ${4 - w}-27z`));
const label = (cls, dy) => (x, y, t) => out.push(`<text class="place ${cls}" x="${x}" y="${y + dy}">${t}</text>`);
each(places, label("", 16));
each(parks, label("park", 18));
each(cities, label("city", 20));
svg.innerHTML = out.join("");
```
